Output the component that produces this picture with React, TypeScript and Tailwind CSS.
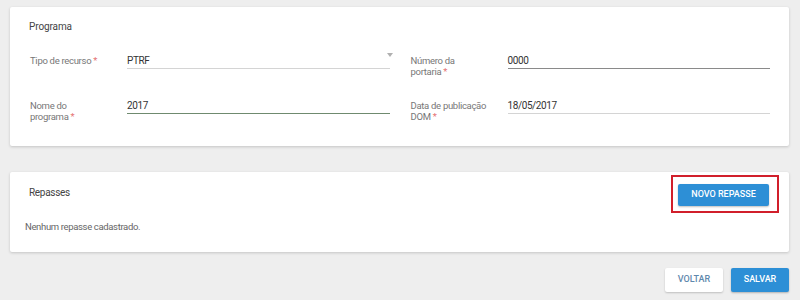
export default function App() {
  return (
    <main className="min-h-screen bg-[#eeeeee] px-[10px] pt-[7px] font-['Roboto','Liberation_Sans',sans-serif]">
      {/* Programa */}
      <section className="mr-[1px] h-[139px] rounded-[2px] bg-white px-[19px] pt-[13px] shadow-[0_1px_3px_rgba(0,0,0,0.18)]">
        <h2 className="text-[10px] leading-[14px] tracking-[-0.1px] text-[#444]">Programa</h2>
        <div className="mt-[20px] grid grid-cols-2 gap-x-[20px]">
          <Field label="Tipo de recurso" value="PTRF" line="border-[#d4d4d4]" select />
          <Field label="Número da" label2="portaria" value="0000" line="border-[#8a8a8a]" />
          <Field label="Nome do" label2="programa" value="2017" line="border-[#6f8a6f]" />
          <Field label="Data de publicação" label2="DOM" value="18/05/2017" line="border-[#d4d4d4]" />
        </div>
      </section>

      {/* Repasses */}
      <section className="mr-[1px] mt-[26px] h-[80px] rounded-[2px] bg-white pl-[15px] pr-[20px] pt-[10px] shadow-[0_1px_3px_rgba(0,0,0,0.18)]">
        <div className="flex h-[22px] items-center justify-between">
          <h2 className="pl-[4px] text-[10px] leading-[14px] tracking-[-0.3px] text-[#444]">Repasses</h2>
          <div className="relative">
            <button className="h-[22px] w-[91px] rounded-[2px] bg-[#2d8fd6] text-[9px] font-medium text-white shadow-[0_1px_2px_rgba(0,0,0,0.25)]">
              NOVO REPASSE
            </button>
            <div className="pointer-events-none absolute -bottom-[7px] -left-[7px] -right-[10px] -top-[5px] border-2 border-[#d11f2b]" />
          </div>
        </div>
        <p className="mt-[16px] text-[9.5px] leading-[14px] tracking-[-0.35px] text-[#666]">Nenhum repasse cadastrado.</p>
      </section>

      {/* Actions */}
      <div className="mr-[1px] mt-[16px] flex justify-end gap-[8px]">
        <button className="h-[24px] w-[58px] rounded-[2px] bg-white text-[9px] font-medium text-[#5f88ad] shadow-[0_1px_2px_rgba(0,0,0,0.2)]">
          VOLTAR
        </button>
        <button className="h-[24px] w-[58px] rounded-[2px] bg-[#2d8fd6] text-[9px] font-medium text-white shadow-[0_1px_2px_rgba(0,0,0,0.25)]">
          SALVAR
        </button>
      </div>
    </main>
  );
}

type FieldProps = {
  label: string;
  label2?: string;
  value: string;
  line: string;
  select?: boolean;
};

function Field({ label, label2, value, line, select }: FieldProps) {
  return (
    <div className="flex h-[45px] items-start">
      <div className="w-[98px] shrink-0 pl-[1px] pt-[1px] text-[9.5px] leading-[11px] tracking-[-0.3px] text-[#777]">
        {label2 ? (
          <>
            {label}
            <br />
            {label2} <span className="text-[#e57373]">*</span>
          </>
        ) : (
          <>
            {label} <span className="text-[#e57373]">*</span>
          </>
        )}
      </div>
      <div className={"relative h-[15px] flex-1 border-b text-[10px] leading-[14px] tracking-[-0.4px] text-[#333] " + line}>
        {value}
        {select && (
          <span className="absolute -top-[1px] right-[-3px] h-0 w-0 border-x-[3.5px] border-t-[4px] border-x-transparent border-t-[#b0b0b0]" />
        )}
      </div>
    </div>
  );
}
